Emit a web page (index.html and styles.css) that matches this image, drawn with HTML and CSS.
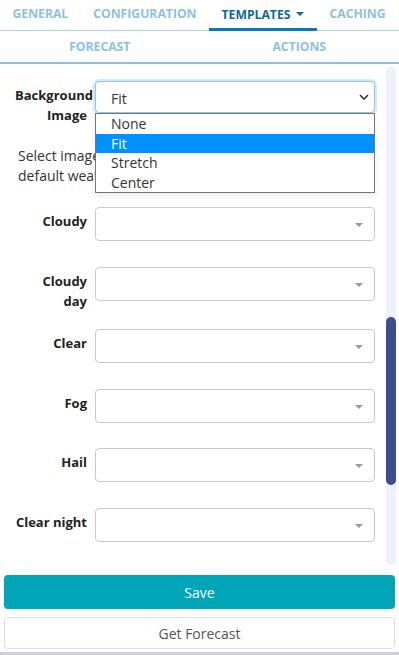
FILE: index.html
```html
<!DOCTYPE html>
<html lang="en">
  <head>
    <meta charset="UTF-8" />
    <meta name="viewport" content="width=device-width, initial-scale=1.0" />
    <title>Weather settings</title>
    <link rel="stylesheet" href="styles.css">
  </head>
  <body>
    <nav class="tabs">
      <div class="tabs__row tabs__row--main">
        <a class="tab">General</a>
        <a class="tab">Configuration</a>
        <a class="tab tab--active">Templates <span class="tab__caret"></span></a>
        <a class="tab">Caching</a>
      </div>
      <div class="tabs__row tabs__row--sub">
        <a class="tab tab--wide">Forecast</a>
        <a class="tab tab--wide">Actions</a>
      </div>
    </nav>

    <div class="panel">
      <div class="panel__body">
        <div class="field">
          <label class="field__label">Background Image</label>
          <div class="select select--open">
            <span class="select__value">Fit</span>
            <svg class="select__chevron" viewBox="0 0 10 6" fill="none" stroke="currentColor" stroke-width="1.6">
              <path d="M1 1l4 4 4-4" />
            </svg>
            <ul class="options">
              <li class="options__item">None</li>
              <li class="options__item options__item--selected">Fit</li>
              <li class="options__item">Stretch</li>
              <li class="options__item">Center</li>
            </ul>
          </div>
        </div>

        <p class="panel__hint">
          Select images to be used as background for the default weather conditions below.
        </p>

        <div class="field">
          <label class="field__label">Cloudy</label>
          <div class="select"><span class="select__caret"></span></div>
        </div>
        <div class="field">
          <label class="field__label">Cloudy<br>day</label>
          <div class="select"><span class="select__caret"></span></div>
        </div>
        <div class="field">
          <label class="field__label">Clear</label>
          <div class="select"><span class="select__caret"></span></div>
        </div>
        <div class="field">
          <label class="field__label">Fog</label>
          <div class="select"><span class="select__caret"></span></div>
        </div>
        <div class="field">
          <label class="field__label">Hail</label>
          <div class="select"><span class="select__caret"></span></div>
        </div>
        <div class="field">
          <label class="field__label">Clear night</label>
          <div class="select"><span class="select__caret"></span></div>
        </div>
      </div>
      <div class="scrollbar">
        <div class="scrollbar__thumb"></div>
      </div>
    </div>

    <div class="actions">
      <button class="action action--primary">Save</button>
      <button class="action action--secondary">Get Forecast</button>
    </div>
    <div class="page-end"></div>
  </body>
</html>
```

FILE: styles.css
```css
* {
  margin: 0;
  padding: 0;
  box-sizing: border-box;
}
body {
  width: 399px;
  height: 655px;
  overflow: hidden;
  font-family: "Open Sans", "Noto Sans", sans-serif;
  font-size: 13px;
  color: #333;
  background-color: #fff;
}

/* tabs */
.tabs__row {
  display: flex;
  height: 31px;
  border-bottom: 1px solid #a8d0e8;
}
.tabs__row--main .tab {
  padding-bottom: 3px;
}
.tabs__row--sub {
  height: 33px;
  border-bottom: 2px solid #8dbfdc;
}
.tab {
  display: flex;
  align-items: center;
  justify-content: center;
  padding: 0 12.5px;
  font-size: 12.2px;
  font-weight: 700;
  text-transform: uppercase;
  color: #8fc0df;
  white-space: nowrap;
  cursor: pointer;
}
.tab--wide {
  flex: 1;
}
.tabs__row--main .tab--active {
  color: #0b67a0;
  border-bottom: 3px solid #0a78b9;
  margin-bottom: -1px;
  padding-bottom: 0;
}
.tab__caret {
  display: inline-block;
  margin-left: 6px;
  border-top: 4px solid #0b67a0;
  border-left: 4px solid transparent;
  border-right: 4px solid transparent;
}

/* panel */
.panel {
  display: flex;
  height: 503px;
}
.panel__body {
  flex: 1;
  padding: 17px 5px 0 0;
  overflow: hidden;
}
.panel__hint {
  margin: 28px 0 21px 18px;
  font-size: 14px;
  line-height: 20px;
  color: #333;
}
.scrollbar {
  width: 10px;
  margin: 3px 3px 2px 6px;
  border-radius: 5px;
  background-color: #eef1f8;
  padding-top: 250px;
}
.scrollbar__thumb {
  height: 168px;
  border-radius: 5px;
  background-color: #3a4f8b;
}

/* fields */
.field {
  display: flex;
  align-items: flex-start;
  gap: 8px;
  margin-bottom: 25.5px;
}
.field__label {
  flex: 0 0 87px;
  min-width: 0;
  padding: 4px 0 0 15px;
  margin-bottom: -7px;
  text-align: right;
  font-weight: 700;
  line-height: 20px;
  color: #222;
}
.select {
  position: relative;
  flex: 1;
  height: 34px;
  border: 1px solid #c9c9c9;
  border-radius: 4px;
  background-color: #fff;
}
.select__caret {
  position: absolute;
  right: 11px;
  top: 15px;
  border-top: 4px solid #999;
  border-left: 4px solid transparent;
  border-right: 4px solid transparent;
}
.select--open {
  height: 32px;
  display: flex;
  align-items: center;
  justify-content: space-between;
  padding: 0 5px 0 15px;
  border-color: #92c5e9;
  box-shadow: 0 0 0 2px rgba(140, 190, 230, 0.35);
}
.select__value {
  font-size: 14px;
  color: #333;
  padding-top: 2px;
}
.select__chevron {
  width: 10px;
  height: 6px;
  color: #333;
}

/* open dropdown list */
.options {
  position: absolute;
  top: 31px;
  left: -1px;
  right: -1px;
  list-style: none;
  background-color: #fff;
  border: 1px solid #767676;
  box-shadow: 0 3px 6px rgba(0, 0, 0, 0.08);
  z-index: 5;
}
.options__item {
  height: 19.5px;
  line-height: 19.5px;
  padding-left: 15px;
  font-size: 14px;
  color: #333;
}
.options__item--selected {
  background-color: #0090ff;
  color: #fff;
}

/* buttons */
.actions {
  display: flex;
  flex-direction: column;
  gap: 8px;
  padding: 8px 4px 0 4px;
}
.action {
  height: 34px;
  border-radius: 4px;
  font-family: inherit;
  font-size: 14px;
  cursor: pointer;
}
.action--primary {
  color: #fff;
  border: none;
  background-color: #00a5b8;
}
.action--secondary {
  height: 32px;
  color: #555;
  border: 1px solid #dedede;
  background-color: #fff;
}
.page-end {
  margin-top: 3px;
  height: 3px;
  background-color: #cbd1d6;
}
```
